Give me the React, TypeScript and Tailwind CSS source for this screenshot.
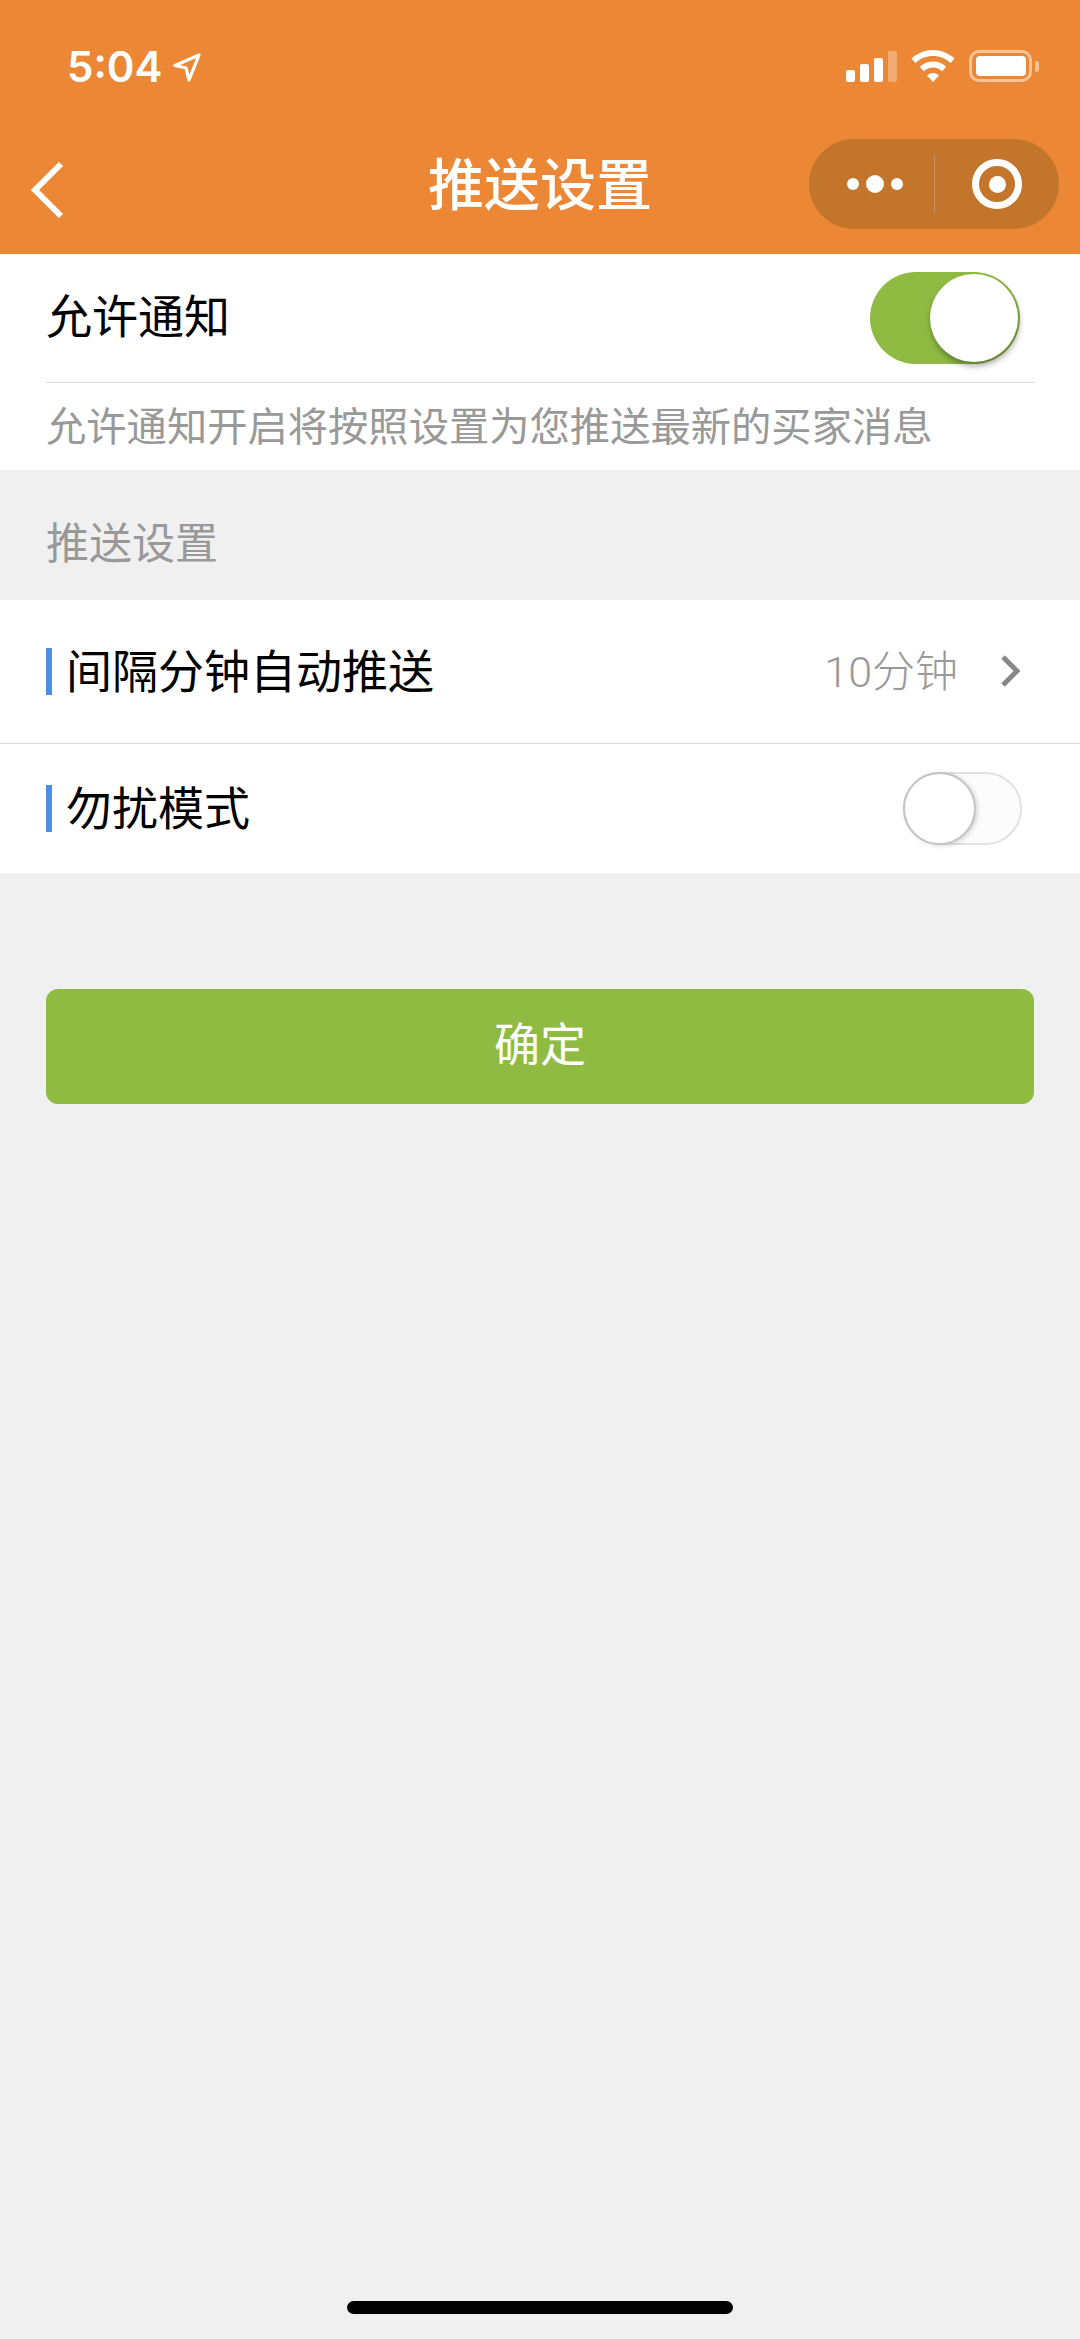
const cjk = "font-['Noto_Sans_CJK_SC','Liberation_Sans',sans-serif]";

function StatusBar() {
  return (
    <div className="flex h-[130px] items-start justify-between pl-[67px] pr-[41px] pt-[50px]">
      <div className="flex items-center gap-[11px]">
        <span className="font-['Inter',sans-serif] text-[42px] leading-[34px] font-semibold text-white">5:04</span>
        <svg width="28" height="29" viewBox="0 0 28 29" fill="none">
          <path d="M26 2 L2 12.5 L13 15 L16 27 Z" stroke="white" strokeWidth="3.2" strokeLinejoin="round" />
        </svg>
      </div>
      <div className="flex items-start gap-[14px]">
        <div className="flex h-[32px] items-end gap-[5px]">
          <div className="h-[12px] w-[9px] rounded-[2px] bg-white" />
          <div className="h-[18px] w-[9px] rounded-[2px] bg-white" />
          <div className="h-[24px] w-[9px] rounded-[2px] bg-white" />
          <div className="h-[31px] w-[9px] rounded-[2px] bg-white/30" />
        </div>
        <svg width="44" height="32" viewBox="0 0 44 32" fill="white">
          <path d="M22 0 C30 0 37.5 3 43.6 8.6 L39.6 13 C34.8 8.4 28.6 6 22 6 C15.4 6 9.2 8.4 4.4 13 L0.4 8.6 C6.5 3 14 0 22 0 Z" />
          <path d="M22 11.5 C27 11.5 31.6 13.4 35.2 16.8 L31 21.2 C28.6 18.9 25.4 17.6 22 17.6 C18.6 17.6 15.4 18.9 13 21.2 L8.8 16.8 C12.4 13.4 17 11.5 22 11.5 Z" />
          <path d="M22 23 C24.4 23 26.4 23.9 28 25.4 L22 32 L16 25.4 C17.6 23.9 19.6 23 22 23 Z" />
        </svg>
        <div className="flex items-center gap-[3px]">
          <div className="flex h-[32px] w-[63px] items-center justify-center rounded-[10px] border-[3px] border-white/50">
            <div className="h-[20px] w-[50px] rounded-[4px] bg-white" />
          </div>
          <div className="h-[11px] w-[4px] rounded-r-[3px] bg-white/50" />
        </div>
      </div>
    </div>
  );
}

function NavBar() {
  return (
    <div className="relative flex h-[124px] items-start justify-between pl-[30px] pr-[21px] pt-[9px]">
      <svg width="36" height="58" viewBox="0 0 36 58" fill="none" className="mt-[22px]">
        <path d="M31 3 L5 29 L31 55" stroke="white" strokeWidth="6" />
      </svg>
      <span className={`${cjk} absolute inset-x-0 top-[16px] text-center text-[56px] leading-[70px] font-medium text-white`}>推送设置</span>
      <div className="flex h-[90px] w-[250px] items-center rounded-full bg-[#c4752c]">
        <div className="flex w-[125px] items-center justify-end gap-[7px] pr-[31px]">
          <div className="h-[12px] w-[12px] rounded-full bg-white" />
          <div className="h-[18px] w-[18px] rounded-full bg-white" />
          <div className="h-[12px] w-[12px] rounded-full bg-white" />
        </div>
        <div className="h-[56px] w-px bg-white/25" />
        <div className="flex flex-1 justify-center">
          <div className="flex h-[50px] w-[50px] items-center justify-center rounded-full border-[7px] border-white">
            <div className="h-[17px] w-[17px] rounded-full bg-white" />
          </div>
        </div>
      </div>
    </div>
  );
}

function Switch({ on }: { on: boolean }) {
  if (on) {
    return (
      <div className="flex h-[92px] w-[150px] items-center justify-end rounded-full bg-[#8fbb43] pr-[2px]">
        <div className="h-[88px] w-[88px] rounded-full bg-white shadow-[1px_4px_6px_rgba(0,0,0,0.35)]" />
      </div>
    );
  }
  return (
    <div className="flex h-[73px] w-[119px] items-center rounded-full border-2 border-[#e2e2e2] bg-[#fcfcfc]">
      <div className="-ml-[2px] h-[73px] w-[73px] shrink-0 rounded-full border-2 border-[#c4c4c4] bg-white shadow-[2px_1px_4px_rgba(0,0,0,0.15)]" />
    </div>
  );
}

function RowTitle({ children }: { children: string }) {
  return (
    <div className="flex items-center gap-[14px]">
      <div className="h-[47px] w-[6px] bg-[#4a90e2]" />
      <span className={`${cjk} block pb-[8px] text-[46px] leading-[60px] text-black`}>{children}</span>
    </div>
  );
}

export default function App() {
  return (
    <div className={`${cjk} flex min-h-[2339px] flex-col bg-[#f0f0f0]`}>
      <div className="bg-[#ec8735]">
        <StatusBar />
        <NavBar />
      </div>

      {/* notification toggle */}
      <div className="bg-white pl-[46px] pr-[45px]">
        <div className="flex h-[129px] items-center justify-between border-b border-[#d9d9d9] pr-[15px]">
          <span className="block pb-[10px] text-[46px] leading-[60px] text-black">允许通知</span>
          <Switch on />
        </div>
        <div className="flex h-[87px] items-center pb-[6px] text-[40.3px] leading-[52px] text-[#999]">
          允许通知开启将按照设置为您推送最新的买家消息
        </div>
      </div>

      <div className="flex h-[130px] items-center pl-[46px] pt-[10px] text-[43px] leading-[56px] text-[#999]">推送设置</div>

      <div className="bg-white">
        <div className="flex h-[144px] items-center justify-between border-b border-[#d9d9d9] pl-[46px] pr-[60px]">
          <RowTitle>间隔分钟自动推送</RowTitle>
          <div className="flex items-center gap-[42px]">
            <span className="block pb-[4px] font-['Roboto','Noto_Sans_CJK_SC',sans-serif] text-[43px] leading-[60px] font-light text-[#999]">10<span className={cjk}>分钟</span></span>
            <svg width="20" height="32" viewBox="0 0 20 32" fill="none" className="mb-[2px]">
              <path d="M3 2 L17 16 L3 30" stroke="#888" strokeWidth="5" />
            </svg>
          </div>
        </div>
        <div className="flex h-[129px] items-center justify-between pl-[46px] pr-[58px]">
          <RowTitle>勿扰模式</RowTitle>
          <Switch on={false} />
        </div>
      </div>

      <button className="mx-[46px] mt-[116px] h-[115px] w-[988px] rounded-[12px] bg-[#8fbb43] pb-[10px] text-[46px] text-white">确定</button>

      {/* home indicator */}
      <div className="mt-auto flex justify-center pb-[25px]">
        <div className="h-[13px] w-[386px] rounded-full bg-black" />
      </div>
    </div>
  );
}
